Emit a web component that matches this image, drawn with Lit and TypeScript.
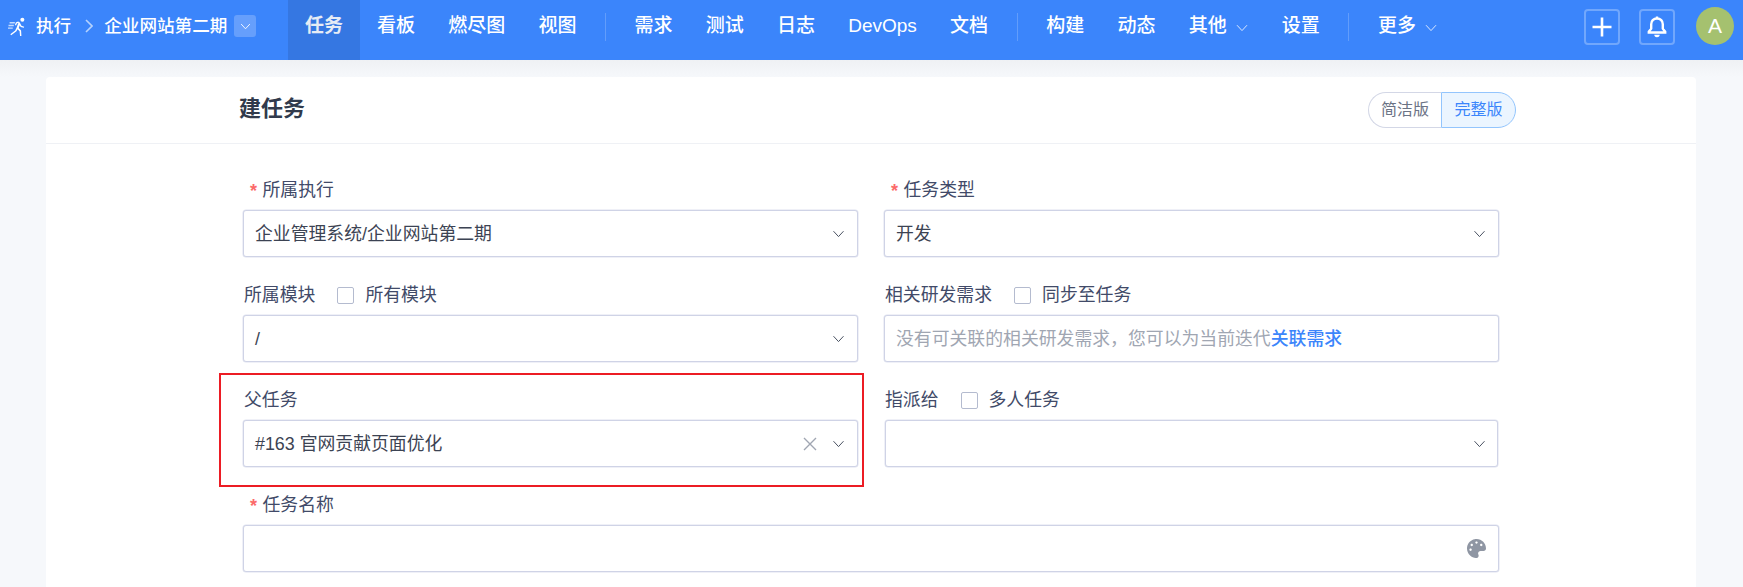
import { LitElement, html, css } from "lit";
import { customElement } from "lit/decorators.js";

const chevron = (cls: string) => html`<svg class=${cls} viewBox="0 0 12 8"><path d="M1 1.200 6 6.600 11 1.200" fill="none" stroke="currentColor" stroke-width="1"/></svg>`;

@customElement("app-root")
export class AppRoot extends LitElement {
  static styles = css`
    :host { display: block; height: 587px; overflow: hidden; background: #f6f8fb;
      font-family: "Liberation Sans", "Noto Sans CJK SC", sans-serif; font-size: 17.85px; line-height: 24px; color: #3c4353; }
    * { box-sizing: border-box; }
    .top { height: 60px; background: #3b85fb; display: flex; color: #fff; }
    .crumb { display: flex; align-items: center; height: 52px; padding-left: 8px; width: 288px; flex: none; font-weight: 500; font-size: 17.6px; }
    .run { width: 19px; height: 19px; margin-right: 9px; }
    .sep-arrow { width: 8px; height: 14px; margin: 0 11px 0 14px; color: #b5d2fd; }
    .dd { width: 22px; height: 22px; margin-left: 7px; background: rgba(255,255,255,.22); border-radius: 3px; display: flex; align-items: center; justify-content: center; }
    .dd svg { width: 11px; height: 7px; }
    nav { display: flex; font-size: 19px; font-weight: 500; flex: 1; }
    nav a { display: flex; align-items: center; height: 60px; padding: 0 16.6px 8px; }
    nav a.on { background: #3577e2; color: #e6ecf5; font-weight: 700; padding: 0 17px 8px; margin-right: .4px; }
    nav a svg { width: 12px; height: 8px; margin-left: 9px; margin-right: 1px; color: #dbe8fe; margin-top: 3px; }
    nav i { width: 1px; height: 28px; margin: 13px 12px 0; background: rgba(255,255,255,.2); }
    .tools { display: flex; align-items: flex-start; flex: none; padding-right: 9px; }
    .tool { width: 36px; height: 36px; margin-top: 9px; border: 2px solid rgba(255,255,255,.28); border-radius: 4px; margin-right: 19px; display: flex; align-items: center; justify-content: center; }
    .tool svg { width: 22px; height: 22px; }
    .avatar { width: 38px; height: 38px; margin-top: 7px; border-radius: 50%; background: #a5c16f; display: flex; align-items: center; justify-content: center; font-size: 21px; margin-left: 2px; }
    .shade { height: 17px; background: linear-gradient(#eff1f4, #f6f8fb); }
    .card { margin: 0 47px 0 46px; background: #fff; border-radius: 4px 4px 0 0; height: 600px; }
    .head { height: 67px; border-bottom: 1px solid #eff1f5; display: flex; align-items: center; justify-content: space-between; padding: 0 180px 0 193px; }
    .head h1 { margin: 0 0 2px; font-size: 22px; font-weight: 700; color: #313a4c; }
    .toggle { display: flex; height: 36px; font-size: 16px; }
    .toggle span { width: 73px; display: flex; align-items: center; justify-content: center; border: 1px solid #d3d7e6; border-radius: 18px 0 0 18px; border-right: 0; color: #6b7385; }
    .toggle span.on { width: 75px; border: 1px solid #93c5fd; border-radius: 0 18px 18px 0; background: #ebf5ff; color: #3b85fb; }
    form { display: grid; grid-template-columns: 615px 615px; column-gap: 26px; padding: 33px 0 0 197px; grid-auto-rows: 105px; }
    .field { position: relative; }
    .field.wide { grid-column: 1 / 3; }
    .label { display: flex; align-items: center; height: 26px; margin-bottom: 7px; color: #414a68; padding-left: 1px; }
    .label.req { padding-left: 7px; }
    .label b { color: #fb6a6a; font-weight: 700; width: 12px; font-size: 18px; margin-right: .5px; padding-top: 2px; }
    .box { width: 17px; height: 17px; border: 1px solid #b4bbcf; border-radius: 2px; margin: 0 11px 0 22px; }
    .ctl { height: 47px; border: 1px solid #cfd3e6; border-radius: 3px; display: flex; align-items: center; padding: 0 12px 0 11px; background: #fff; box-shadow: 0 0 0 .5px #dfe2ef; }
    .ctl.narrow { margin: 0 1px; padding-left: 10px; padding-right: 11px; }
    .ctl span.t { flex: 1; }
    .ctl .ph { color: #a0a6b2; }
    .ctl a { color: #3b85fb; font-weight: 500; }
    .chev { width: 13px; height: 8px; color: #4b5363; }
    .x { width: 14px; height: 14px; color: #a0a6b2; margin-right: 15px; }
    .pal { width: 19px; height: 19px; fill: #8f96a3; margin-right: 0; }
    .mark { position: absolute; left: -24px; top: -14px; width: 645px; height: 114px; border: 2px solid #ec1c24; pointer-events: none; }
  `;

  private nav1 = ["看板", "燃尽图", "视图"];
  private nav2 = ["需求", "测试", "日志", "DevOps", "文档"];

  render() {
    const arrow = chevron("chev");
    return html`
      <div class="top">
        <div class="crumb">
          <svg class="run" viewBox="0 0 18 18" fill="#fff"><circle cx="13.600" cy="2.600" r="1.900"/><path d="M10.500 3.800 7.400 5.200 6.600 7.600l1 .4.8-1.900 1.500-.6-1.800 4.700-1.300 2.600-4.600 3.600.8 1 5-3.800 1-2 2 1.900.4 4.600 1.300-.1-.3-5.200-2.200-2.300.9-2.600.9 1.600 3 .8.3-1.100-2.600-.8-1.300-2.700a2 2 0 0 0-2.300-1z"/><path d="M1.500 5.500h5M.5 8h5M0 10.500h4.500" stroke="#fff" stroke-opacity=".7" stroke-width="1.300"/></svg>
          <span>执行</span>
          <svg class="sep-arrow" viewBox="0 0 8 14"><path d="M1 1l6 6-6 6" fill="none" stroke="currentColor" stroke-width="1.600"/></svg>
          <span>企业网站第二期</span>
          <span class="dd">${chevron("")}</span>
        </div>
        <nav>
          <a class="on">任务</a>
          ${this.nav1.map((n) => html`<a>${n}</a>`)}
          <i></i>
          ${this.nav2.map((n) => html`<a>${n}</a>`)}
          <i></i>
          <a>构建</a><a>动态</a><a>其他${chevron("")}</a><a>设置</a>
          <i></i>
          <a>更多${chevron("")}</a>
        </nav>
        <div class="tools">
          <span class="tool"><svg viewBox="0 0 22 22"><path d="M11 1.500v19M1.500 11h19" stroke="#fff" stroke-width="2.600" fill="none"/></svg></span>
          <span class="tool"><svg viewBox="0 0 22 22"><path d="M11 2.500c-3.600 0-5.800 2.600-5.800 5.800v4.400l-2.400 3v.8h16.400v-.8l-2.400-3V8.300c0-3.200-2.200-5.800-5.800-5.800z" fill="none" stroke="#fff" stroke-width="2.400"/><path d="M8.300 18.800h5.400a2.700 2.400 0 0 1-5.400 0z" fill="#fff"/><rect x="9.800" y=".5" width="2.400" height="2.500" fill="#fff"/></svg></span>
          <span class="avatar">A</span>
        </div>
      </div>
      <div class="shade"></div>
      <div class="card">
        <div class="head">
          <h1>建任务</h1>
          <div class="toggle"><span>简洁版</span><span class="on">完整版</span></div>
        </div>
        <form>
          <div class="field">
            <div class="label req"><b>*</b>所属执行</div>
            <div class="ctl"><span class="t">企业管理系统/企业网站第二期</span>${arrow}</div>
          </div>
          <div class="field">
            <div class="label req"><b>*</b>任务类型</div>
            <div class="ctl"><span class="t">开发</span>${arrow}</div>
          </div>
          <div class="field">
            <div class="label">所属模块<span class="box"></span>所有模块</div>
            <div class="ctl"><span class="t">/</span>${arrow}</div>
          </div>
          <div class="field">
            <div class="label">相关研发需求<span class="box"></span>同步至任务</div>
            <div class="ctl"><span class="t ph">没有可关联的相关研发需求，您可以为当前迭代<a>关联需求</a></span></div>
          </div>
          <div class="field">
            <div class="label">父任务</div>
            <div class="ctl"><span class="t">#163 官网贡献页面优化</span>
              <svg class="x" viewBox="0 0 14 14"><path d="M1 1l12 12M13 1 1 13" stroke="currentColor" stroke-width="1.400" fill="none"/></svg>${arrow}</div>
            <div class="mark"></div>
          </div>
          <div class="field">
            <div class="label">指派给<span class="box"></span>多人任务</div>
            <div class="ctl narrow"><span class="t"></span>${arrow}</div>
          </div>
          <div class="field wide">
            <div class="label req"><b>*</b>任务名称</div>
            <div class="ctl"><span class="t"></span>
              <svg class="pal" viewBox="0 0 512 512"><path d="M204.300 5C104.900 24.400 24.800 104.300 5.200 203.400c-37 187 131.700 326.400 258.800 306.700 41.200-6.400 61.400-54.600 42.500-91.700-23.100-45.400 9.900-98.400 60.900-98.400h79.700c35.800 0 64.800-29.600 64.900-65.300C511.500 97.100 368.100-26.900 204.300 5zM96 320c-17.700 0-32-14.300-32-32s14.300-32 32-32 32 14.300 32 32-14.300 32-32 32zm32-128c-17.700 0-32-14.300-32-32s14.300-32 32-32 32 14.300 32 32-14.300 32-32 32zm128-64c-17.700 0-32-14.300-32-32s14.300-32 32-32 32 14.300 32 32-14.300 32-32 32zm128 64c-17.700 0-32-14.300-32-32s14.300-32 32-32 32 14.300 32 32-14.300 32-32 32z"/></svg></div>
          </div>
        </form>
      </div>
    `;
  }
}
